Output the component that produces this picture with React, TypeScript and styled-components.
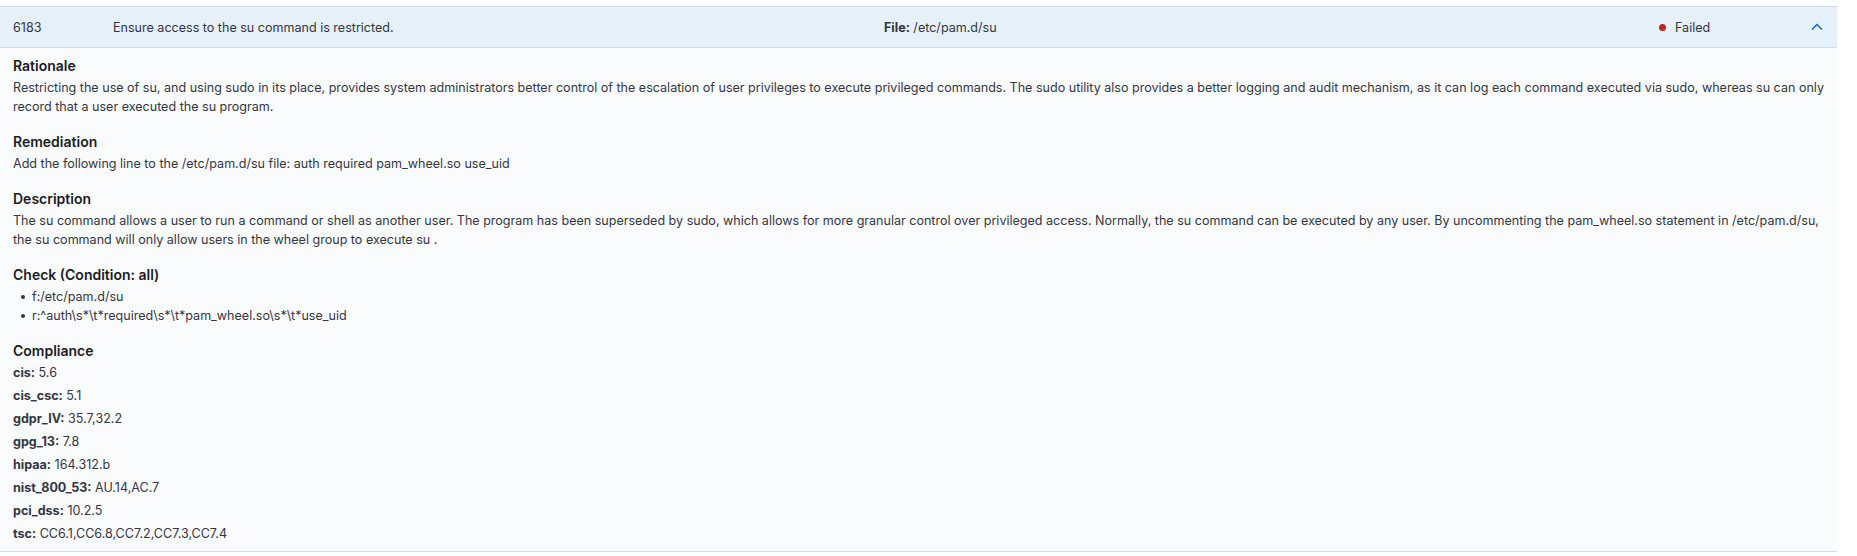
import React from "react";
import styled, { createGlobalStyle } from "styled-components";

const GlobalStyle = createGlobalStyle`
  html, body { margin: 0; padding: 0; background: #ffffff; }
  body {
    font-family: Inter, "Noto Sans", "Liberation Sans", sans-serif;
    color: #343741;
    -webkit-font-smoothing: antialiased;
  }
  * { box-sizing: border-box; }
`;

const Panel = styled.div`
  width: 1837px;
  margin-top: 6px;
  border-bottom: 1px solid #d3dae6;
`;

const HeaderRow = styled.div`
  display: grid;
  grid-template-columns: 100px 771px 775px 1fr 40px;
  align-items: center;
  height: 42px;
  padding-left: 13px;
  background: #e6f0f8;
  border-top: 1px solid #d3dae6;
  border-bottom: 1px solid #d3dae6;
  font-size: 12.55px;
  color: #343741;
`;

const Cell = styled.div`
  white-space: nowrap;
  overflow: hidden;
`;

const Bold = styled.b`
  font-weight: 700;
  color: #343741;
`;

const Status = styled.div`
  display: flex;
  align-items: center;
  gap: 9px;
`;

const Dot = styled.span<{ $color: string }>`
  width: 7px;
  height: 7px;
  border-radius: 50%;
  background: ${(p) => p.$color};
  flex: none;
`;

const ToggleButton = styled.button`
  justify-self: center;
  display: flex;
  align-items: center;
  justify-content: center;
  width: 24px;
  height: 24px;
  padding: 0;
  border: 0;
  background: transparent;
  color: #006bb4;
  cursor: pointer;
`;

const Body = styled.div`
  background: #fafbfd;
  padding: 8px 4px 8px 13px;
`;

const Section = styled.section`
  margin-bottom: 16px;
  &:last-child { margin-bottom: 0; }
`;

const Heading = styled.h3`
  margin: 0 0 2px;
  font-size: 14px;
  line-height: 20px;
  font-weight: 600;
  color: #1a1c21;
`;

const Text = styled.p`
  margin: 0;
  font-size: 12.55px;
  line-height: 19px;
  color: #343741;
`;

const List = styled.ul`
  margin: 0;
  padding-left: 19px;
  list-style: none;
`;

const Item = styled.li`
  position: relative;
  font-size: 12.55px;
  line-height: 19px;
  &::before {
    content: "";
    position: absolute;
    left: -11px;
    top: 8px;
    width: 4px;
    height: 4px;
    border-radius: 50%;
    background: #343741;
  }
`;

const ComplianceLine = styled.p`
  margin: 0 0 4px;
  font-size: 12.55px;
  line-height: 19px;
  color: #343741;
  &:last-child { margin-bottom: 0; }
`;

const compliance: [string, string][] = [
  ["cis", "5.6"],
  ["cis_csc", "5.1"],
  ["gdpr_IV", "35.7,32.2"],
  ["gpg_13", "7.8"],
  ["hipaa", "164.312.b"],
  ["nist_800_53", "AU.14,AC.7"],
  ["pci_dss", "10.2.5"],
  ["tsc", "CC6.1,CC6.8,CC7.2,CC7.3,CC7.4"],
];

export default function App() {
  return (
    <>
      <GlobalStyle />
      <Panel>
        <HeaderRow>
          <Cell>6183</Cell>
          <Cell>Ensure access to the su command is restricted.</Cell>
          <Cell>
            <Bold>File:</Bold> /etc/pam.d/su
          </Cell>
          <Status>
            <Dot $color="#bd271e" />
            <span>Failed</span>
          </Status>
          <ToggleButton aria-label="Collapse">
            <svg width="12" height="8" viewBox="0 0 12 8" fill="none">
              <path d="M1 6.5 L6 1.5 L11 6.5" stroke="currentColor" strokeWidth="1.3" />
            </svg>
          </ToggleButton>
        </HeaderRow>
        <Body>
          <Section>
            <Heading>Rationale</Heading>
            <Text>
              Restricting the use of su, and using sudo in its place, provides system administrators better control of the escalation of user privileges to execute privileged commands. The sudo utility also provides a better logging and audit mechanism, as it can log each command executed via sudo, whereas su can only record that a user executed the su program.
            </Text>
          </Section>
          <Section>
            <Heading>Remediation</Heading>
            <Text>Add the following line to the /etc/pam.d/su file: auth required pam_wheel.so use_uid</Text>
          </Section>
          <Section>
            <Heading>Description</Heading>
            <Text>
              The su command allows a user to run a command or shell as another user. The program has been superseded by sudo, which allows for more granular control over privileged access. Normally, the su command can be executed by any user. By uncommenting the pam_wheel.so statement in /etc/pam.d/su, the su command will only allow users in the wheel group to execute su .
            </Text>
          </Section>
          <Section>
            <Heading>Check (Condition: all)</Heading>
            <List>
              <Item>f:/etc/pam.d/su</Item>
              <Item>r:^auth\s*\t*required\s*\t*pam_wheel.so\s*\t*use_uid</Item>
            </List>
          </Section>
          <Section>
            <Heading>Compliance</Heading>
            {compliance.map(([k, v]) => (
              <ComplianceLine key={k}>
                <Bold>{k}:</Bold> {v}
              </ComplianceLine>
            ))}
          </Section>
        </Body>
      </Panel>
    </>
  );
}
